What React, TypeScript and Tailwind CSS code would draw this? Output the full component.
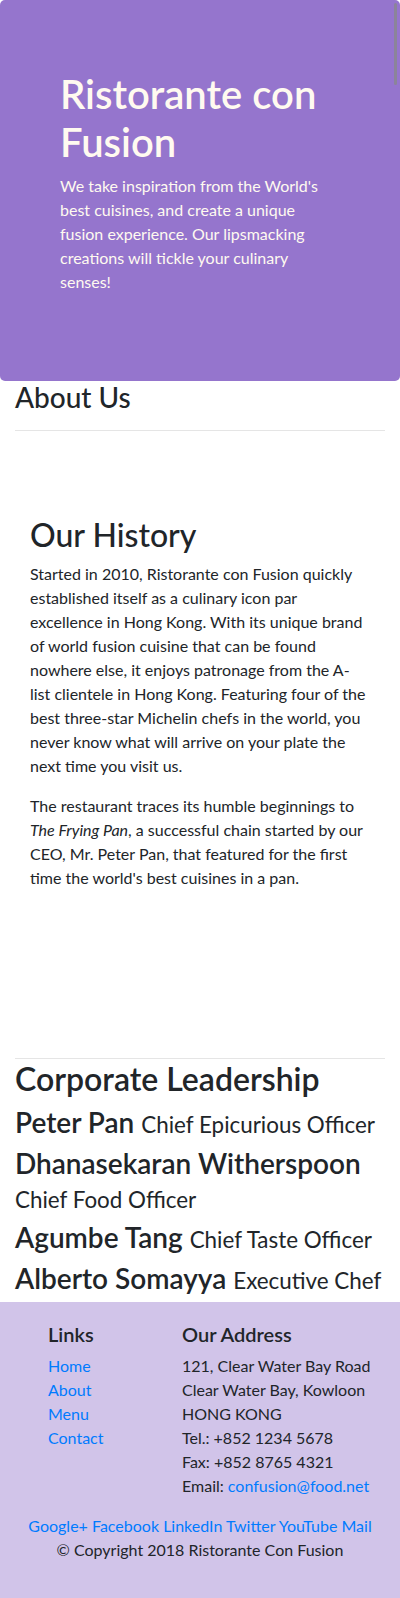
const leaders = [
  { name: 'Peter Pan', title: 'Chief Epicurious Officer' },
  { name: 'Dhanasekaran Witherspoon', title: 'Chief Food Officer' },
  { name: 'Agumbe Tang', title: 'Chief Taste Officer' },
  { name: 'Alberto Somayya', title: 'Executive Chef' },
];

const socials = ['Google+', 'Facebook', 'LinkedIn', 'Twitter', 'YouTube', 'Mail'];

export default function App() {
  return (
    <div className="relative font-['Lato',sans-serif] text-[16px] leading-6 text-[#212529]">
      {/* overlay scrollbar thumb */}
      <div className="absolute right-[3px] top-[3px] h-[82px] w-[3px] rounded-full bg-[#8b8499]" />

      <header className="rounded-[5px] bg-[#9575cd] pl-[60px] pt-[70px] pb-[71px] text-[#fffaf0]">
        <h1 className="mb-2 text-[40px] font-semibold leading-[1.2]">Ristorante con Fusion</h1>
        <p className="mb-4 w-[276px]">
          We take inspiration from the World's best cuisines, and create a unique fusion experience. Our
          lipsmacking creations will tickle your culinary senses!
        </p>
      </header>

      <div className="px-[15px]">
        <h3 className="text-[28px] font-medium leading-[1.2]">About Us</h3>
        <hr className="mt-[15px] border-t border-[#e5e5e5]" />
      </div>

      <section className="px-[30px] pt-[85px] pb-[152px]">
        <h2 className="mb-2 text-[32px] font-medium leading-[1.2]">Our History</h2>
        <p className="mb-4 w-[339px]">
          Started in 2010, Ristorante con Fusion quickly established itself as a culinary icon par excellence in
          Hong Kong. With its unique brand of world fusion cuisine that can be found nowhere else, it enjoys
          patronage from the A-list clientele in Hong Kong. Featuring four of the best three-star Michelin chefs
          in the world, you never know what will arrive on your plate the next time you visit us.
        </p>
        <p className="mb-4 w-[342px]">
          The restaurant traces its humble beginnings to <em>The Frying Pan</em>, a successful chain started by
          our CEO, Mr. Peter Pan, that featured for the first time the world's best cuisines in a pan.
        </p>
      </section>

      <section className="px-[15px]">
        <hr className="mb-[1px] border-t border-[#e5e5e5]" />
        <h2 className="mb-2 text-[32px] font-semibold leading-[1.2]">Corporate Leadership</h2>
        {leaders.map(l => (
          <h3 key={l.name} className="mb-[7px] text-[28px] font-semibold leading-[1.2]">
            {l.name} <small className="text-[22.4px] font-normal">{l.title}</small>
          </h3>
        ))}
      </section>

      <footer className="bg-[#d1c4e9] pt-5 pb-[37px]">
        <div className="flex">
          <div className="ml-[48px] w-[104px]">
            <h5 className="mb-2 text-[20px] font-semibold leading-[1.2]">Links</h5>
            <ul className="flex flex-col">
              {['Home', 'About', 'Menu', 'Contact'].map(x => (
                <li key={x}>
                  <a href="#" className="text-[#007bff]">{x}</a>
                </li>
              ))}
            </ul>
          </div>
          <div className="ml-[30px] w-[203px]">
            <h5 className="mb-2 text-[20px] font-semibold leading-[1.2]">Our Address</h5>
            <address className="mb-4 not-italic">
              121, Clear Water Bay Road<br />
              Clear Water Bay, Kowloon<br />
              HONG KONG<br />
              Tel.: +852 1234 5678<br />
              Fax: +852 8765 4321<br />
              Email: <a href="#" className="text-[#007bff]">confusion@food.net</a>
            </address>
          </div>
        </div>
        <div className="text-center">
          {socials.map((s, i) => (
            <span key={s}>
              <a href="#" className="text-[#007bff]">{s}</a>
              {i < socials.length - 1 ? ' ' : ''}
            </span>
          ))}
        </div>
        <p className="text-center">© Copyright 2018 Ristorante Con Fusion</p>
      </footer>
    </div>
  );
}
